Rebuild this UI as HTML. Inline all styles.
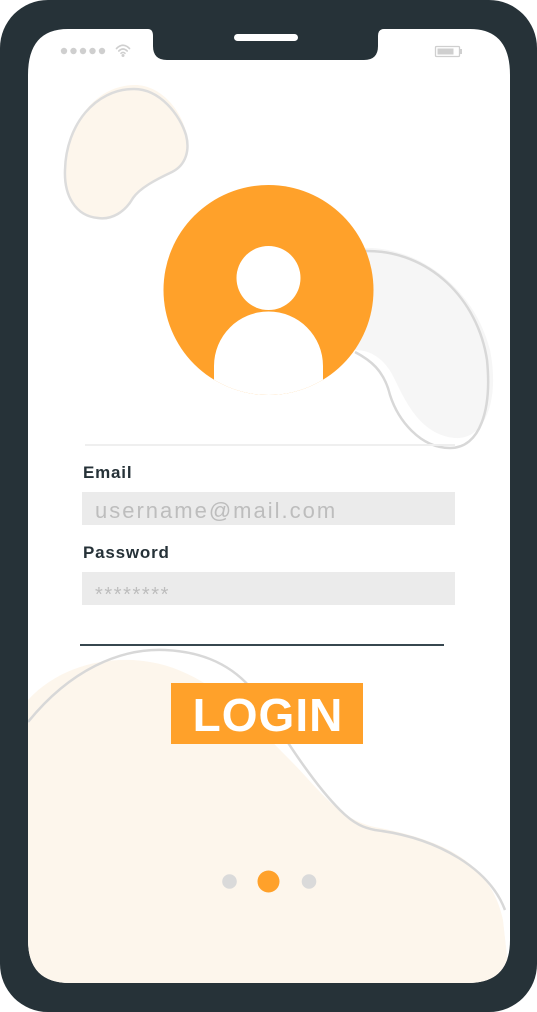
<!DOCTYPE html>
<html><head><meta charset="utf-8"><style>
html,body{margin:0;padding:0;background:#fff}
body{width:537px;height:1012px;overflow:hidden}
svg{display:block}
</style></head><body>
<svg width="537" height="1012" viewBox="0 0 537 1012" xmlns="http://www.w3.org/2000/svg">
<defs>
<clipPath id="scr"><path d="M68 29 H148 Q153 29 153 36 V46 Q153 60 167 60 H364 Q378 60 378 46 V36 Q378 29 384 29 H470 Q510 29 510 75 V940 Q510 983 468 983 H70 Q28 983 28 940 V75 Q28 29 68 29 Z"/></clipPath>
<clipPath id="av"><circle cx="268.5" cy="290" r="105"/></clipPath>
</defs>
<rect x="0" y="0" width="537" height="1012" rx="48" fill="#263238"/>
<g clip-path="url(#scr)">
<rect x="0" y="0" width="537" height="1012" fill="#fff"/>
<path d="M135 85 C165 85 190 120 188 150 C186 162 180 168 172 172 C155 180 140 188 133 198 C125 212 112 220 98 218 C75 216 64 195 65 170 C66 125 95 85 135 85 Z" fill="#fdf6ec"/>
<path d="M134 89 C160 89 180 115 186 135 C190 150 186 165 172 172 C155 180 140 188 133 198 C125 212 112 220 98 218 C75 216 64 195 65 170 C66 125 95 89 134 89 Z" fill="none" stroke="#dcdcdc" stroke-width="2.5"/>
<path d="M360 248 C420 245 475 290 490 350 C500 400 485 440 455 438 C420 435 405 400 395 380 C385 358 370 350 355 350 Z" fill="#f6f6f6"/>
<path d="M365 251 C430 250 478 300 487 360 C492 410 480 448 450 448 C420 448 398 420 390 395 C384 370 370 360 355 352" fill="none" stroke="#d8d8d8" stroke-width="2.5"/>
<path d="M28 700 C60 665 110 655 150 662 C210 672 250 720 290 760 C320 790 340 822 380 828 C440 840 490 860 503 920 L510 983 L28 983 Z" fill="#fdf6ec"/>
<path d="M28 722 C70 670 120 648 165 650 C210 652 240 670 260 700 C280 730 310 780 340 810 C355 825 365 828 375 830 C440 838 490 870 505 910" fill="none" stroke="#d8d8d8" stroke-width="2.5"/>
</g>
<rect x="234" y="34" width="64" height="7" rx="3.5" fill="#fff"/>
<g fill="#cfcfcf">
<circle cx="64" cy="51" r="3.2"/><circle cx="73.5" cy="51" r="3.2"/><circle cx="83" cy="51" r="3.2"/><circle cx="92.5" cy="51" r="3.2"/><circle cx="102" cy="51" r="3.2"/>
<circle cx="123" cy="55.5" r="1.5"/>
</g>
<g fill="none" stroke="#cfcfcf" stroke-width="1.6" stroke-linecap="round">
<path d="M116.5 48.5 Q123 42 129.5 48.5"/><path d="M118.8 51 Q123 47 127.2 51"/><path d="M121 53.3 Q123 51.5 125 53.3"/>
</g>
<rect x="435.5" y="46.5" width="24" height="10" rx="1" fill="none" stroke="#cfcfcf" stroke-width="1.3"/>
<rect x="437.5" y="48.5" width="16" height="6" fill="#cfcfcf"/>
<rect x="460" y="49" width="2" height="5" fill="#cfcfcf"/>
<circle cx="268.5" cy="290" r="105" fill="#ffa12a"/>
<g clip-path="url(#av)" fill="#fff">
<circle cx="268.5" cy="278" r="32"/>
<path d="M214 366 A54.5 54.5 0 0 1 323 366 V400 H214 Z"/>
</g>
<rect x="85" y="444" width="370" height="2" fill="#efefef"/>
<text x="83" y="478" font-family="Liberation Sans, sans-serif" font-weight="bold" font-size="17" fill="#263238" letter-spacing="0.8">Email</text>
<rect x="82" y="492" width="373" height="33" fill="#ebebeb"/>
<text x="95" y="518" font-family="Liberation Sans, sans-serif" font-size="22" fill="#bdbdbd" letter-spacing="2">username@mail.com</text>
<text x="83" y="558" font-family="Liberation Sans, sans-serif" font-weight="bold" font-size="17" fill="#263238" letter-spacing="0.8">Password</text>
<rect x="82" y="572" width="373" height="33" fill="#ebebeb"/>
<text x="95" y="601" font-family="Liberation Sans, sans-serif" font-size="20" fill="#bdbdbd" letter-spacing="1.6">********</text>
<rect x="80" y="644" width="364" height="2" fill="#37474f"/>
<rect x="171" y="683" width="192" height="61" fill="#ffa12a"/>
<text x="268" y="731" text-anchor="middle" font-family="Liberation Sans, sans-serif" font-weight="bold" font-size="46" fill="#fff" letter-spacing="1">LOGIN</text>
<circle cx="229.5" cy="881.5" r="7.3" fill="#dadada"/>
<circle cx="268.5" cy="881.5" r="11" fill="#ffa12a"/>
<circle cx="309" cy="881.5" r="7.3" fill="#dadada"/>
</svg>
</body></html>
